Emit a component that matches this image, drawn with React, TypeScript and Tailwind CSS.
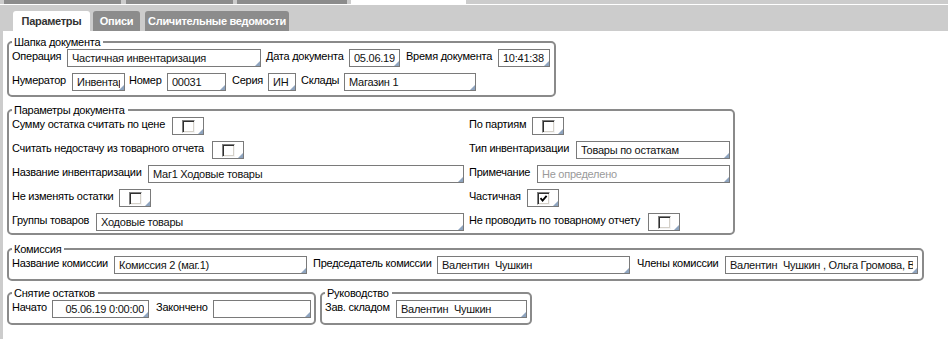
import React from "react";

const txt = "text-[11px] tracking-[-0.25px]";

function Label({ className = "", children }: { className?: string; children: React.ReactNode }) {
  return (
    <span className={`shrink-0 whitespace-nowrap leading-[14px] text-black ${txt} ${className}`}>
      {children}
    </span>
  );
}

function Corner() {
  return (
    <span className="absolute right-0 bottom-0 w-[5px] h-[5px] bg-[#8ea4bf] [clip-path:polygon(100%_0,100%_100%,0_100%)]" />
  );
}

function Field({
  className = "",
  value,
  placeholder,
  right,
}: {
  className?: string;
  value?: string;
  placeholder?: string;
  right?: boolean;
}) {
  return (
    <div
      className={`relative shrink-0 h-[18px] border border-[#7a7a7a] bg-white overflow-hidden px-[4px] leading-[16px] whitespace-pre ${txt} ${
        right ? "text-right" : ""
      } ${className}`}
    >
      {value ? (
        <span className="block overflow-hidden text-[#111]">{value}</span>
      ) : (
        <span className="block overflow-hidden text-[#9a9a9a]">{placeholder}</span>
      )}
      <Corner />
    </div>
  );
}

function Check({ checked }: { checked?: boolean }) {
  return (
    <div className="relative shrink-0 w-[32px] h-[18px] border border-[#7a7a7a] bg-white flex items-center pl-[9px]">
      <span className="w-[13px] h-[13px] border border-t-[#808080] border-l-[#808080] border-r-[#f4f4f4] border-b-[#f4f4f4] shadow-[inset_1px_1px_0_#303030,inset_-1px_-1px_0_#d4d0c8] bg-white flex items-center justify-center">
        {checked && (
          <svg width="9" height="9" viewBox="0 0 9 9">
            <path d="M1.5 4.2 L3.6 6.6 L7.6 1.8" fill="none" stroke="#000" strokeWidth="1.8" />
          </svg>
        )}
      </span>
      <Corner />
    </div>
  );
}

function Box({
  title,
  className = "",
  children,
}: {
  title: string;
  className?: string;
  children: React.ReactNode;
}) {
  return (
    <fieldset className={`shrink-0 border-2 border-[#8a8a8a] rounded-[5px] pl-[3px] pr-[3px] ${className}`}>
      <legend className={`pl-[2px] pr-[3px] leading-[14px] text-black ${txt}`}>{title}</legend>
      {children}
    </fieldset>
  );
}

const Row = ({ children }: { children: React.ReactNode }) => (
  <div className="flex items-start">{children}</div>
);

export default function App() {
  return (
    <div className="w-[948px] h-[339px] bg-white overflow-hidden flex flex-col font-['Liberation_Sans',Arial,sans-serif]">
      {/* outer tab strip */}
      <div className="h-[4px] bg-[#cccccc] flex">
        <div className="ml-[4px] w-[117px] bg-[#8c8c8c]" />
        <div className="ml-[5px] w-[107px] bg-[#8c8c8c]" />
        <div className="ml-[4px] w-[110px] bg-[#8c8c8c]" />
        <div className="ml-[4px] w-[115px] bg-white" />
      </div>
      <div className="h-[1px] bg-white" />

      {/* inner tabs */}
      <div className="h-[26px] bg-[#cccccc] flex items-end pl-[13px] font-bold text-[11px] tracking-[-0.3px] whitespace-nowrap">
        <div className="w-[77px] h-[20px] bg-white rounded-t-[3px] flex items-center justify-center text-[#333]">
          Параметры
        </div>
        <div className="ml-[3px] w-[47px] h-[20px] bg-[#8c8c8c] rounded-t-[3px] flex items-center justify-center text-white">
          Описи
        </div>
        <div className="ml-[5px] w-[144px] h-[20px] bg-[#8c8c8c] rounded-t-[3px] flex items-center justify-center text-white">
          Сличительные ведомости
        </div>
      </div>

      <div className="flex flex-1">
        <div className="w-[3px] bg-[#cccccc]" />
        <div className="pl-[4px] pt-[4px] flex flex-col">
          <Box title="Шапка документа" className="w-[549px] pb-[4px]">
            <div className="flex flex-col gap-[6px]">
              <Row>
                <Label className="w-[55px]">Операция</Label>
                <Field className="w-[194px]" value="Частичная инвентаризация" />
                <Label className="w-[88px] pl-[5px]">Дата документа</Label>
                <Field className="w-[51px]" value="05.06.19" />
                <Label className="w-[98px] pl-[6px]">Время документа</Label>
                <Field className="w-[52px]" value="10:41:38" />
              </Row>
              <Row>
                <Label className="w-[60px]">Нумератор</Label>
                <Field className="w-[53px]" value="Инвентаризация" />
                <Label className="w-[42px] pl-[4px]">Номер</Label>
                <Field className="w-[59px]" value="00031" />
                <Label className="w-[42px] pl-[6px]">Серия</Label>
                <Field className="w-[28px]" value="ИН" />
                <Label className="w-[48px] pl-[5px]">Склады</Label>
                <Field className="w-[132px]" value="Магазин 1" />
              </Row>
            </div>
          </Box>

          <Box title="Параметры документа" className="mt-[6px] w-[728px] pb-[2px]">
            <div className="grid grid-cols-[457px_1fr] gap-y-[6px]">
              <Row>
                <Label className="w-[160px]">Сумму остатка считать по цене</Label>
                <Check />
              </Row>
              <Row>
                <Label className="w-[63px]">По партиям</Label>
                <Check />
              </Row>

              <Row>
                <Label className="w-[200px]">Считать недостачу из товарного отчета</Label>
                <Check />
              </Row>
              <Row>
                <Label className="w-[107px]">Тип инвентаризации</Label>
                <Field className="w-[154px]" value="Товары по остаткам" />
              </Row>

              <Row>
                <Label className="w-[136px]">Название инвентаризации</Label>
                <Field className="w-[316px]" value="Маг1 Ходовые товары" />
              </Row>
              <Row>
                <Label className="w-[68px]">Примечание</Label>
                <Field className="w-[193px]" placeholder="Не определено" />
              </Row>

              <Row>
                <Label className="w-[107px]">Не изменять остатки</Label>
                <Check />
              </Row>
              <Row>
                <Label className="w-[58px]">Частичная</Label>
                <Check checked />
              </Row>

              <Row>
                <Label className="w-[84px]">Группы товаров</Label>
                <Field className="w-[368px]" value="Ходовые товары" />
              </Row>
              <Row>
                <Label className="w-[179px]">Не проводить по товарному отчету</Label>
                <Check />
              </Row>
            </div>
          </Box>

          <Box title="Комиссия" className="mt-[7px] w-[917px] pb-[5px]">
            <Row>
              <Label className="w-[102px]">Название комиссии</Label>
              <Field className="w-[193px]" value="Комиссия 2 (маг.1)" />
              <Label className="w-[130px] pl-[6px]">Председатель комиссии</Label>
              <Field className="w-[193px]" value="Валентин  Чушкин" />
              <Label className="w-[95px] pl-[7px]">Члены комиссии</Label>
              <Field className="w-[193px]" value="Валентин  Чушкин , Ольга Громова, Виктор Смирнов" />
            </Row>
          </Box>

          <div className="mt-[5px] flex gap-[4px]">
            <Box title="Снятие остатков" className="w-[309px] pb-[5px]">
              <Row>
                <Label className="w-[40px]">Начато</Label>
                <Field className="w-[97px]" value="05.06.19 0:00:00" right />
                <Label className="w-[64px] pl-[7px]">Закончено</Label>
                <Field className="w-[98px]" />
              </Row>
            </Box>
            <Box title="Руководство" className="w-[211px] pb-[5px]">
              <Row>
                <Label className="w-[71px]">Зав. складом</Label>
                <Field className="w-[131px]" value="Валентин  Чушкин" />
              </Row>
            </Box>
          </div>
        </div>
      </div>
    </div>
  );
}
